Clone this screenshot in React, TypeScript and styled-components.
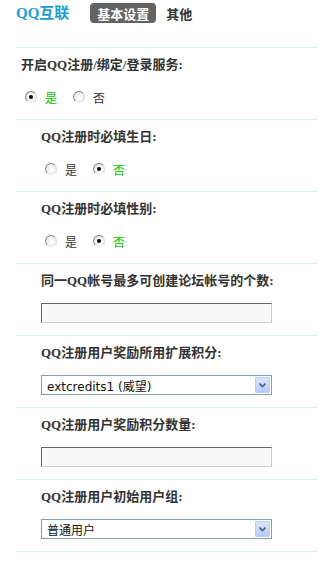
import React, { useState } from "react";
import styled, { createGlobalStyle } from "styled-components";

const Global = createGlobalStyle`
  html, body { margin: 0; padding: 0; background: #fff; }
  body { font-family: "Liberation Serif", "Noto Sans CJK SC", serif; color: #333; }
`;

const Page = styled.div`
  padding-left: 16px;
`;

const Header = styled.div`
  display: flex;
  align-items: center;
  height: 20px;
  margin-top: 3px;
  margin-bottom: 24px;
`;

const Title = styled.h1`
  margin: 0 21px 0 0;
  font-size: 15px;
  line-height: 20px;
  font-weight: bold;
  color: #1a9cd6;
  font-family: "Liberation Serif", "Noto Sans CJK SC", serif;
`;

const Tab = styled.span<{ $active?: boolean }>`
  display: inline-flex;
  align-items: center;
  height: 20px;
  padding: 0 ${(p) => (p.$active ? "7px" : "0")};
  margin-right: 10px;
  border-radius: 4px;
  font-size: 13px;
  font-weight: bold;
  background: ${(p) => (p.$active ? "#636363" : "transparent")};
  color: ${(p) => (p.$active ? "#fff" : "#333")};
`;

const Item = styled.div<{ $sub?: boolean }>`
  border-top: 1px dotted #cde2ee;
  padding: 8px 0 12px ${(p) => (p.$sub ? "25px" : "5px")};
`;

const Label = styled.div`
  font-size: 13px;
  line-height: 18px;
  font-weight: bold;
  color: #333;
  margin-bottom: 13px;
`;

const RadioRow = styled.div`
  display: flex;
  align-items: center;
  height: 20px;
  padding-left: 4px;
`;

const RadioOpt = styled.label<{ $on: boolean }>`
  display: inline-flex;
  align-items: center;
  margin-right: 16px;
  font-size: 12px;
  font-family: "Noto Sans CJK SC", sans-serif;
  color: ${(p) => (p.$on ? "#00c800" : "#333")};
  cursor: pointer;
`;

const RadioDot = styled.span<{ $on: boolean }>`
  position: relative;
  box-sizing: border-box;
  width: 12px;
  height: 12px;
  margin-right: 8px;
  border-radius: 50%;
  border: 1px solid;
  border-color: #7c7c7c #d8d8d8 #ececec #8a8a8a;
  background: radial-gradient(circle at 60% 60%, #ffffff 0%, #eeeeee 55%, #d4d4d4 100%);
  &::after {
    content: "";
    display: ${(p) => (p.$on ? "block" : "none")};
    position: absolute;
    left: 3px;
    top: 3px;
    width: 4px;
    height: 4px;
    border-radius: 50%;
    background: #000;
  }
`;

const TextInput = styled.input`
  box-sizing: border-box;
  display: block;
  width: 231px;
  height: 20px;
  margin: 0;
  padding: 0 4px;
  border: 1px solid;
  border-color: #666 #ccc #ccc #666;
  background: #f9f9f9;
  font-size: 12px;
  outline: none;
`;

const SelectBox = styled.div`
  position: relative;
  box-sizing: border-box;
  width: 231px;
  height: 20px;
  border: 1px solid #7f9db9;
  background: #fff;
  display: flex;
  align-items: center;
  padding-left: 5px;
  font-family: "DejaVu Sans", "Noto Sans CJK SC", sans-serif;
  font-size: 12px;
  color: #111;
`;

const ArrowBtn = styled.span`
  position: absolute;
  right: 1px;
  top: 1px;
  width: 15px;
  height: 16px;
  box-sizing: border-box;
  border: 1px solid #b9cdf5;
  border-radius: 1px;
  background: linear-gradient(#dce6fc, #b7cbf9);
  display: flex;
  align-items: center;
  justify-content: center;
`;

function Radios({ initial }: { initial: boolean }) {
  const [v, setV] = useState(initial);
  return (
    <RadioRow>
      <RadioOpt $on={v} onClick={() => setV(true)}>
        <RadioDot $on={v} />是
      </RadioOpt>
      <RadioOpt $on={!v} onClick={() => setV(false)}>
        <RadioDot $on={!v} />否
      </RadioOpt>
    </RadioRow>
  );
}

function Select({ value }: { value: string }) {
  return (
    <SelectBox>
      {value}
      <ArrowBtn>
        <svg width="7" height="5" viewBox="0 0 7 5">
          <path d="M0.5 0.5 L3.5 3.5 L6.5 0.5" fill="none" stroke="#4d6185" strokeWidth="1.6" />
        </svg>
      </ArrowBtn>
    </SelectBox>
  );
}

export default function App() {
  return (
    <Page>
      <Global />
      <Header>
        <Title>QQ互联</Title>
        <Tab $active>基本设置</Tab>
        <Tab>其他</Tab>
      </Header>
      <Item>
        <Label>开启QQ注册/绑定/登录服务:</Label>
        <Radios initial={true} />
      </Item>
      <Item $sub>
        <Label>QQ注册时必填生日:</Label>
        <Radios initial={false} />
      </Item>
      <Item $sub>
        <Label>QQ注册时必填性别:</Label>
        <Radios initial={false} />
      </Item>
      <Item $sub>
        <Label>同一QQ帐号最多可创建论坛帐号的个数:</Label>
        <TextInput defaultValue="" />
      </Item>
      <Item $sub>
        <Label>QQ注册用户奖励所用扩展积分:</Label>
        <Select value="extcredits1 (威望)" />
      </Item>
      <Item $sub>
        <Label>QQ注册用户奖励积分数量:</Label>
        <TextInput defaultValue="" />
      </Item>
      <Item $sub>
        <Label>QQ注册用户初始用户组:</Label>
        <Select value="普通用户" />
      </Item>
      <Item $sub>
        <Label>QQ注册的用户忽略注册验证:</Label>
        <Radios initial={false} />
      </Item>
    </Page>
  );
}
